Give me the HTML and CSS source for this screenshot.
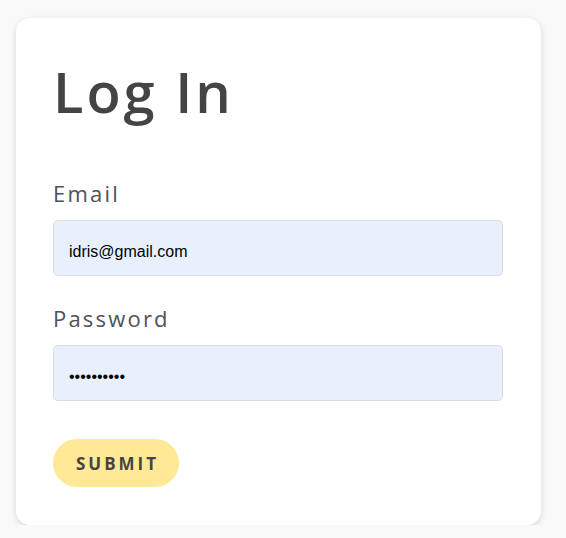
FILE: index.html
```html
<!DOCTYPE html>
<html lang="en">
<head>
<meta charset="utf-8">
<title>Log In</title>
<link rel="stylesheet" href="styles.css">
</head>
<body>
<main class="card">
  <h1 class="title">Log In</h1>
  <form class="form">
    <label class="label" for="email">Email</label>
    <input class="input" id="email" type="email" value="idris@gmail.com">
    <label class="label label-pw" for="password">Password</label>
    <input class="input" id="password" type="password" value="0123456789">
    <button class="submit" type="button">SUBMIT</button>
  </form>
</main>
</body>
</html>
```
FILE: styles.css
```css
html, body {
  margin: 0;
  padding: 0;
}
body {
  background: #f9f9f9;
  padding: 18px 0 0 16px;
  font-family: "Open Sans", Lato, sans-serif;
  color: #444;
}
.card {
  box-sizing: border-box;
  width: 525px;
  height: 507px;
  background: #fff;
  border-radius: 14px;
  box-shadow: 0 2px 6px rgba(0, 0, 0, 0.14);
  padding: 40px 38px 0 37px;
}
.title {
  margin: 0;
  font-size: 56px;
  line-height: 67px;
  font-weight: 600;
  color: #444;
  letter-spacing: 3px;
}
.form {
  display: flex;
  flex-direction: column;
  align-items: flex-start;
  margin-top: 54px;
}
.label {
  font-size: 22px;
  line-height: 28px;
  letter-spacing: 2.2px;
  color: #50525a;
  font-weight: 400;
}
.label-pw {
  margin-top: 28px;
}
.input {
  box-sizing: border-box;
  width: 450px;
  height: 56px;
  margin-top: 13px;
  padding: 7px 15px 0;
  border: 1px solid #dcdcdc;
  border-radius: 5px;
  background: #e8f0fe;
  font-family: Arial, "Liberation Sans", sans-serif;
  font-size: 16px;
  color: #000;
  outline: none;
}
.submit {
  margin-top: 38px;
  width: 126px;
  height: 48px;
  border: none;
  border-radius: 24px;
  background: #ffe896;
  font-family: "Open Sans", Lato, sans-serif;
  font-weight: 700;
  font-size: 17px;
  letter-spacing: 3px;
  color: #444;
  padding: 1px 0 0 3px;
}
```
